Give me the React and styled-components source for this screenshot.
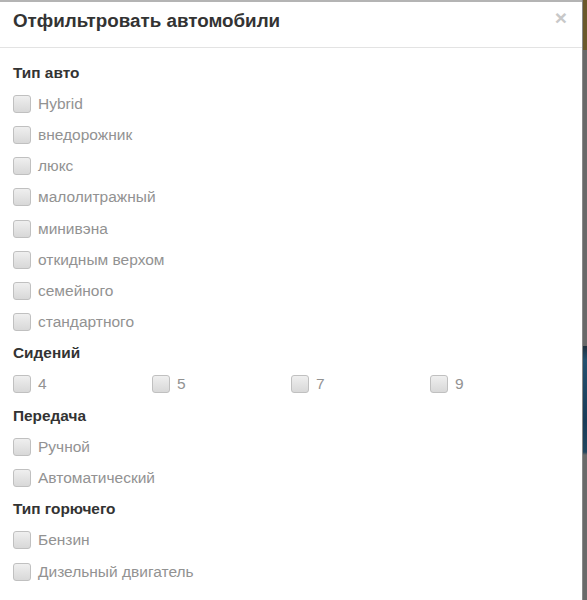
import React, { useState } from "react";
import styled, { createGlobalStyle } from "styled-components";

const groups = [
  {
    title: "Тип авто",
    items: [
      "Hybrid",
      "внедорожник",
      "люкс",
      "малолитражный",
      "минивэна",
      "откидным верхом",
      "семейного",
      "стандартного",
    ],
  },
  { title: "Сидений", items: ["4", "5", "7", "9"], inline: true },
  { title: "Передача", items: ["Ручной", "Автоматический"] },
  { title: "Тип горючего", items: ["Бензин", "Дизельный двигатель"] },
];

const GlobalStyle = createGlobalStyle`
  html, body {
    margin: 0;
    padding: 0;
    background: #ffffff;
  }
  body {
    font-family: "Liberation Sans", Arial, sans-serif;
  }
`;

const App = () => {
  const [checked, setChecked] = useState({});

  const toggle = (key) => {
    setChecked((prev) => ({ ...prev, [key]: !prev[key] }));
  };

  return (
    <Page>
      <GlobalStyle />
      <Modal>
        <Header>
          <Title>Отфильтровать автомобили</Title>
          <Close>×</Close>
        </Header>
        <Body>
          {groups.map((group) => (
            <Group key={group.title}>
              <Heading>{group.title}</Heading>
              <List inline={group.inline ? 1 : 0}>
                {group.items.map((item) => {
                  const key = group.title + item;
                  return (
                    <Option key={key}>
                      <Box
                        type="checkbox"
                        checked={!!checked[key]}
                        onChange={() => toggle(key)}
                      />
                      <span>{item}</span>
                    </Option>
                  );
                })}
              </List>
            </Group>
          ))}
        </Body>
      </Modal>
      <Edge />
    </Page>
  );
};

const Page = styled.div`
  display: flex;
  width: 587px;
  height: 600px;
  overflow: hidden;
`;

const Modal = styled.div`
  width: 582px;
  flex-shrink: 0;
  background: #ffffff;
  border-top: 2px solid #b4b4b4;
`;

const Header = styled.div`
  display: flex;
  justify-content: space-between;
  align-items: flex-start;
  height: 46px;
  box-sizing: border-box;
  padding: 7px 15px 0 13px;
  border-bottom: 1px solid #e3e3e3;
`;

const Title = styled.div`
  font-size: 18.8px;
  line-height: 24px;
  font-weight: bold;
  color: #333333;
`;

const Close = styled.div`
  font-size: 21px;
  line-height: 16px;
  font-weight: bold;
  color: #c8c8c8;
  margin-top: 1px;
  cursor: pointer;
`;

const Body = styled.div`
  padding: 9px 13px 0;
`;

const Group = styled.div``;

const Heading = styled.div`
  display: flex;
  align-items: center;
  height: 31.2px;
  font-size: 15.4px;
  font-weight: bold;
  color: #333333;
`;

const List = styled.div`
  display: grid;
  grid-template-columns: ${({ inline }) => (inline ? "repeat(4, 139px)" : "1fr")};
`;

const Option = styled.label`
  display: flex;
  align-items: center;
  height: 31.2px;
  font-size: 15.5px;
  color: #929292;
  cursor: pointer;
`;

const Box = styled.input`
  appearance: none;
  width: 18px;
  height: 18px;
  margin: 0 7px 0 0;
  box-sizing: border-box;
  border: 1px solid #c0c0c0;
  border-radius: 3px;
  background: linear-gradient(#efefef, #d8d8d8);
  cursor: pointer;
  &:checked {
    background: linear-gradient(#8fb8e8, #5a8fd0);
    border-color: #4d7fbf;
  }
`;

const Edge = styled.div`
  flex: 1;
  background: linear-gradient(
    to bottom,
    #6b592b 0,
    #6b592b 50px,
    #696969 50px,
    #696969 346px,
    #1f2f3d 346px,
    #24506f 360px,
    #1a3b58 420px,
    #22465f 452px,
    #6a6a6a 455px,
    #6a6a6a 600px
  );
  border-left: 1px solid #8a8a8a;
`;

export default App;
